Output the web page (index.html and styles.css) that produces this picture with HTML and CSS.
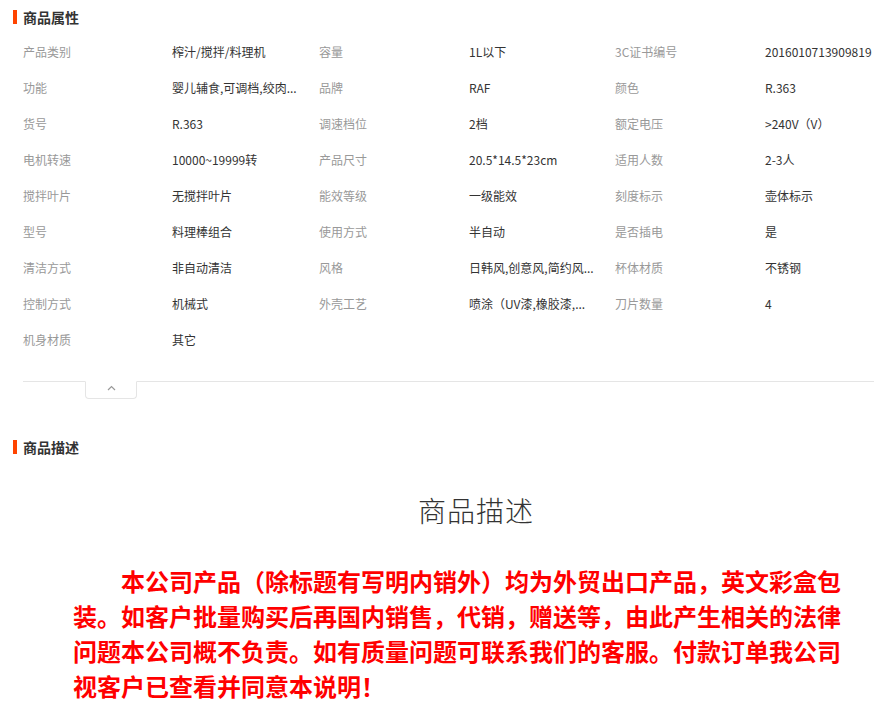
FILE: index.html
```html
<!DOCTYPE html>
<html lang="zh-CN">
<head>
<meta charset="utf-8">
<title>商品属性</title>
<link rel="stylesheet" href="styles.css">
</head>
<body>
<section class="section">
  <h2 class="sec-head"><span class="bar"></span>商品属性</h2>
  <div class="attrs">
    <div class="lbl">产品类别</div><div class="val">榨汁/搅拌/料理机</div>
    <div class="lbl">容量</div><div class="val">1L以下</div>
    <div class="lbl">3C证书编号</div><div class="val">2016010713909819</div>

    <div class="lbl">功能</div><div class="val">婴儿辅食,可调档,绞肉...</div>
    <div class="lbl">品牌</div><div class="val">RAF</div>
    <div class="lbl">颜色</div><div class="val">R.363</div>

    <div class="lbl">货号</div><div class="val">R.363</div>
    <div class="lbl">调速档位</div><div class="val">2档</div>
    <div class="lbl">额定电压</div><div class="val">&gt;240V（V）</div>

    <div class="lbl">电机转速</div><div class="val">10000~19999转</div>
    <div class="lbl">产品尺寸</div><div class="val">20.5*14.5*23cm</div>
    <div class="lbl">适用人数</div><div class="val">2-3人</div>

    <div class="lbl">搅拌叶片</div><div class="val">无搅拌叶片</div>
    <div class="lbl">能效等级</div><div class="val">一级能效</div>
    <div class="lbl">刻度标示</div><div class="val">壶体标示</div>

    <div class="lbl">型号</div><div class="val">料理棒组合</div>
    <div class="lbl">使用方式</div><div class="val">半自动</div>
    <div class="lbl">是否插电</div><div class="val">是</div>

    <div class="lbl">清洁方式</div><div class="val">非自动清洁</div>
    <div class="lbl">风格</div><div class="val">日韩风,创意风,简约风...</div>
    <div class="lbl">杯体材质</div><div class="val">不锈钢</div>

    <div class="lbl">控制方式</div><div class="val">机械式</div>
    <div class="lbl">外壳工艺</div><div class="val">喷涂（UV漆,橡胶漆,...</div>
    <div class="lbl">刀片数量</div><div class="val">4</div>

    <div class="lbl">机身材质</div><div class="val">其它</div>
  </div>
  <div class="fold">
    <button class="fold-tab" type="button" aria-label="收起">
      <svg width="9" height="6" viewBox="0 0 9 6"><polyline points="1,5 4.5,1.5 8,5" fill="none" stroke="#999" stroke-width="1.2"/></svg>
    </button>
  </div>
</section>

<section class="section section-desc">
  <h2 class="sec-head"><span class="bar"></span>商品描述</h2>
  <div class="desc">
    <p class="desc-title">商品描述</p>
    <p class="notice">本公司产品（除标题有写明内销外）均为外贸出口产品，英文彩盒包装。如客户批量购买后再国内销售，代销，赠送等，由此产生相关的法律问题本公司概不负责。如有质量问题可联系我们的客服。付款订单我公司视客户已查看并同意本说明！</p>
  </div>
</section>
</body>
</html>
```

FILE: styles.css
```css
html, body {
  margin: 0;
  padding: 0;
  background: #fff;
}
body {
  width: 874px;
  overflow: hidden;
  font-family: "Noto Sans CJK SC", "Microsoft YaHei", sans-serif;
  color: #333;
}
.section {
  padding-left: 13px;
}
.sec-head {
  display: flex;
  align-items: center;
  gap: 6px;
  height: 14px;
  margin: 10px 0 0 0;
  font-size: 14px;
  font-weight: bold;
  line-height: 14px;
  color: #333;
}
.bar {
  display: block;
  width: 4px;
  height: 14px;
  background: #ff4400;
}
.attrs {
  display: grid;
  grid-template-columns: 149px 147px 150px 146px 150px 147px;
  grid-auto-rows: 36px;
  margin: 10px 0 0 10px;
  font-size: 12px;
  line-height: 36px;
}
.lbl {
  color: #999;
  white-space: nowrap;
}
.val {
  color: #333;
  white-space: nowrap;
}
.fold {
  margin: 23px 0 0 10px;
  border-top: 1px solid #e5e5e5;
  height: 17px;
  position: relative;
}
.fold-tab {
  position: absolute;
  left: 62px;
  top: -1px;
  width: 52px;
  height: 18px;
  padding: 0;
  border: 1px solid #e5e5e5;
  border-top-color: #fff;
  border-radius: 0 0 4px 4px;
  background: #fff;
  display: flex;
  justify-content: center;
  align-items: flex-start;
  padding-top: 3px;
  box-sizing: border-box;
}
.section-desc {
  margin-top: 41px;
}
.desc {
  padding-left: 60px;
}
.desc-title {
  margin: 40px 0 0 0;
  width: 806px;
  text-align: center;
  font-size: 28px;
  font-weight: 300;
  letter-spacing: 1px;
  line-height: 32px;
  color: #333;
}
.notice {
  width: 770px;
  margin: 37px 0 0 0;
  text-indent: 48px;
  font-size: 24px;
  font-weight: bold;
  line-height: 35px;
  color: #ff0000;
}
```
